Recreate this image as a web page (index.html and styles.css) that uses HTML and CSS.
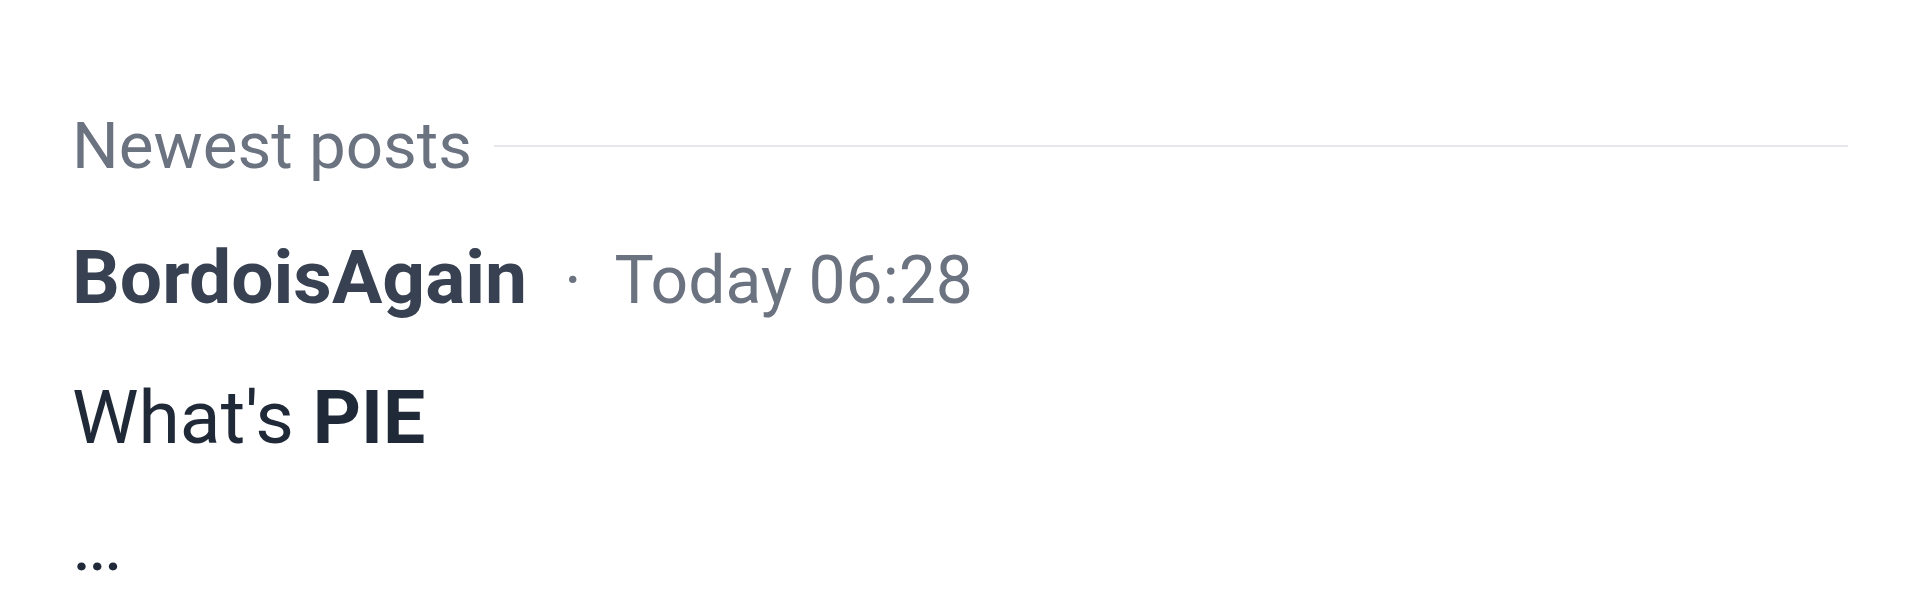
FILE: index.html
```html
<!DOCTYPE html>
<html lang="en">
<head>
<meta charset="utf-8">
<title>Newest posts</title>
<link rel="stylesheet" href="styles.css">
</head>
<body>
<section class="feed">
  <div class="feed-head">
    <h2 class="feed-title">Newest posts</h2>
    <div class="feed-rule"></div>
  </div>
  <article class="post">
    <div class="post-meta">
      <span class="post-author">BordoisAgain</span>
      <span class="post-sep">·</span>
      <span class="post-time">Today 06:28</span>
    </div>
    <p class="post-body">What's <strong>PIE</strong></p>
    <p class="post-more">...</p>
  </article>
</section>
</body>
</html>
```

FILE: styles.css
```css
html, body {
  margin: 0;
  padding: 0;
  background: #ffffff;
}

body {
  font-family: Roboto, "Noto Sans", "Liberation Sans", sans-serif;
  width: 1920px;
  height: 600px;
  overflow: hidden;
}

.feed {
  padding: 107px 72px 0 72px;
}

.feed-head {
  display: flex;
  align-items: center;
  gap: 22px;
}

.feed-title {
  margin: 0;
  font-size: 65.5px;
  font-weight: 400;
  line-height: 1.2;
  color: #6b7280;
  white-space: nowrap;
}

.feed-rule {
  flex: 1;
  height: 2px;
  margin-top: -1px;
  background: #e5e7eb;
}

.post-meta {
  display: flex;
  align-items: baseline;
  margin-top: 46px;
  line-height: 1.2;
  white-space: nowrap;
}

.post-author {
  font-size: 75px;
  font-weight: 700;
  color: #374151;
}

.post-sep {
  font-size: 66px;
  color: #6b7280;
  padding: 0 33px 0 37px;
}

.post-time {
  font-size: 66px;
  color: #6b7280;
}

.post-body {
  margin: 50px 0 0;
  font-size: 75px;
  line-height: 1.2;
  color: #1f2937;
}

.post-body strong {
  font-weight: 700;
}

.post-more {
  margin: 37px 0 0;
  font-size: 75px;
  line-height: 1.2;
  letter-spacing: -4px;
  color: #1f2937;
}
```
